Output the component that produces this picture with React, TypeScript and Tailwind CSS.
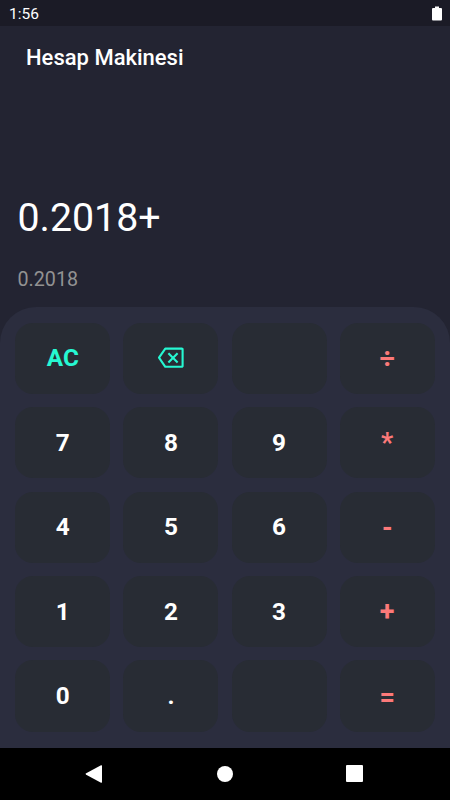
import { useState } from "react";
import clsx from "clsx";

const keys = [
  "AC", "DEL", "", "÷",
  "7", "8", "9", "*",
  "4", "5", "6", "-",
  "1", "2", "3", "+",
  "0", ".", "", "=",
];

const operators = ["÷", "*", "-", "+", "="];

const BackspaceIcon = () => (
  <svg
    width="28"
    height="22"
    viewBox="0 0 28 22"
    fill="none"
    stroke="currentColor"
    strokeWidth="2.1"
    strokeLinejoin="round"
  >
    <path d="M8.3 1.6H24.8a.8.8 0 0 1 .8.8V19a.8.8 0 0 1-.8.8H8.3L2 10.7Z" />
    <path d="M11.4 6.2l9.2 9.2M20.6 6.2l-9.2 9.2" />
  </svg>
);

const StatusBar = () => (
  <div className="flex h-[26px] shrink-0 items-center justify-between bg-[#1b1b26] pl-[9px] pr-2 pt-px">
    <span className="pt-[2px] text-[15.5px] leading-none">1:56</span>
    <svg width="10" height="15" viewBox="0 0 10 15" fill="white">
      <path d="M3 0.5h4V2h2a1 1 0 0 1 1 1v10.5a1 1 0 0 1-1 1H1a1 1 0 0 1-1-1V3a1 1 0 0 1 1-1h2z" />
    </svg>
  </div>
);

const NavBar = () => (
  <div className="flex h-[52.5px] shrink-0 items-center justify-between bg-black pl-[85px] pr-[87px]">
    <svg width="18" height="18" viewBox="0 0 18 18" fill="white">
      <path d="M1.2 8.3 16 0.3q1-.5 1 .6v16.2q0 1.1-1 .6L1.2 9.7q-1.2-.7 0-1.4z" />
    </svg>
    <div className="size-4 rounded-full bg-white" />
    <div className="size-[17px] rounded-[1px] bg-white" />
  </div>
);

const App = () => {
  const [input, setInput] = useState("0.2018+");
  const [result, setResult] = useState("0.2018");

  const handlePress = (key: string) => {
    if (key === "AC") {
      setInput("");
      setResult("");
    } else if (key === "DEL") {
      setInput(input.slice(0, -1));
    } else if (key !== "=") {
      setInput(input + key);
    }
  };

  return (
    <div className="flex h-[800px] w-[450px] flex-col overflow-hidden bg-[#232432] font-['Roboto',sans-serif] text-white">
      <StatusBar />
      <h1 className="pl-[26px] pt-[18px] text-[22px] font-medium leading-[28px]">
        Hesap Makinesi
      </h1>
      <div className="flex h-[235px] shrink-0 flex-col justify-end pb-[16px] pl-[17.5px]">
        <p className="text-[39.3px] leading-[46px]">{input}</p>
        <p className="mt-[27px] text-[19.7px] leading-[23px] text-[#929292]">
          {result}
        </p>
      </div>
      <div className="grid flex-1 grid-cols-4 grid-rows-5 gap-[13.2px] rounded-t-[36px] bg-[#2b2d3e] px-[15.3px] pb-[15.8px] pt-[15.8px]">
        {keys.map((key, index) => (
          <button
            key={index}
            onClick={() => handlePress(key)}
            className={clsx(
              "flex items-center justify-center rounded-[18px] bg-[#282c34] font-bold leading-none",
              operators.includes(key)
                ? "pt-[2px] text-[27px] text-[#fc7979]"
                : "text-[24.3px]",
              (key === "AC" || key === "DEL") && "text-[#26f8d2]"
            )}
          >
            {key === "DEL" ? <BackspaceIcon /> : key}
          </button>
        ))}
      </div>
      <NavBar />
    </div>
  );
};

export default App;
